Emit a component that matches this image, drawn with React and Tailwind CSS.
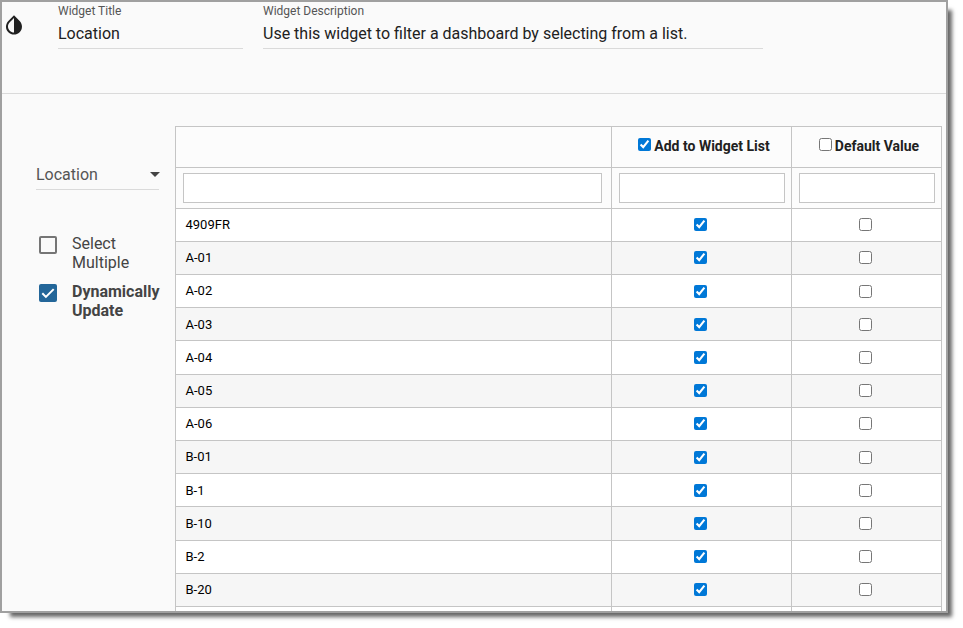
const rows = ['4909FR', 'A-01', 'A-02', 'A-03', 'A-04', 'A-05', 'A-06', 'B-01', 'B-1', 'B-10', 'B-2', 'B-20', '']

function Field({ label, value, className }) {
  return (
    <label className={`flex flex-col border-b border-[#dadada] h-[47px] ${className}`}>
      <span className="text-xs leading-[18px] text-[#555]">{label}</span>
      <span className="text-base leading-[28px] text-[#212121]">{value}</span>
    </label>
  )
}

function Check({ checked = false, className = '' }) {
  return (
    <input
      type="checkbox"
      defaultChecked={checked}
      className={`block w-[13px] h-[13px] shrink-0 accent-[#0078d7] ${className}`}
    />
  )
}

function Option({ checked, label }) {
  return (
    <label className={`flex w-[128px] text-base leading-[19px] text-[#444] ${checked ? 'font-bold' : ''}`}>
      {checked ? (
        <span className="mt-[3px] w-[18px] h-[18px] shrink-0 rounded-[2px] bg-[#236699]">
          <svg viewBox="0 0 18 18" className="w-full h-full" fill="none" stroke="#fff" strokeWidth="2">
            <path d="M3.3 9.3l3.6 3.6L14.7 5.1" />
          </svg>
        </span>
      ) : (
        <span className="mt-[3px] w-[18px] h-[18px] shrink-0 rounded-[2px] border-2 border-[#757575]" />
      )}
      <span className="ml-[15px] mt-px">{label}</span>
    </label>
  )
}

function Filter({ className }) {
  return <input className={`block h-[30px] min-w-0 flex-1 mt-[5px] border border-[#c5c5c5] bg-white ${className}`} />
}

const columns = 'grid grid-cols-[436px_180px_150px]'
const cell = 'flex border-r border-b border-[#c5c5c5]'

export default function App() {
  return (
    <div className="w-[963px] h-[628px] bg-white overflow-hidden font-['Roboto',sans-serif]">
      <div className="w-[948px] h-[613px] border-2 border-[#a0a0a0] bg-[#fafafa] overflow-hidden flex flex-col shadow-[7px_7px_4px_-3px_rgba(0,0,0,0.6)]">
        <header className="flex h-[92px] shrink-0 border-b border-[#dadada]">
          <svg viewBox="0 0 24 24" className="mt-[11px] w-6 h-6 shrink-0" fill="#212121">
            <path d="M17.66 7.93L12 2.27 6.34 7.93c-3.12 3.12-3.12 8.19 0 11.31C7.9 20.8 9.95 21.58 12 21.58c2.05 0 4.1-.78 5.66-2.34 3.12-3.12 3.12-8.19 0-11.31zM12 19.59c-1.6 0-3.11-.62-4.24-1.76C6.62 16.69 6 15.19 6 13.59s.62-3.11 1.76-4.24L12 5.1v14.49z" />
          </svg>
          <Field label="Widget Title" value="Location" className="ml-8 w-[185px]" />
          <Field
            label="Widget Description"
            value="Use this widget to filter a dashboard by selecting from a list."
            className="ml-5 w-[500px]"
          />
        </header>

        <div className="flex">
          <aside className="w-[173px] shrink-0 pl-[34px] pt-[68px]">
            <div className="flex items-center justify-between w-[123px] h-[28px] border-b border-[#dadada] text-base leading-6 text-[#555]">
              <span className="-mt-px">Location</span>
              <svg viewBox="0 0 10 5" className="w-[10px] h-[5px] -mt-[3px] -mr-px">
                <path d="M0 0h10L5 5z" fill="#444" />
              </svg>
            </div>
            <div className="flex flex-col gap-[9px] mt-[43px] ml-[3px]">
              <Option label="Select Multiple" />
              <Option label="Dynamically Update" checked />
            </div>
          </aside>

          <div className="mt-[32px] w-[767px] border-t border-l border-[#c5c5c5]">
            <div className={`${columns} h-[41px] bg-[#fcfcfc] text-sm font-bold text-[#212121]`}>
              <div className={cell} />
              <div className={`${cell} items-center justify-center pl-[5px] pb-[2px]`}>
                <Check checked className="-mt-[3px] mr-[3px]" />
                Add to Widget List
              </div>
              <div className={`${cell} items-center justify-center pl-[5px] pb-[2px]`}>
                <Check className="-mt-[3px] mr-[3px]" />
                Default Value
              </div>
            </div>
            <div className={`${columns} h-[40.7px] bg-[#fcfcfc]`}>
              <div className={cell}><Filter className="ml-[7px] mr-[9px]" /></div>
              <div className={cell}><Filter className="ml-[7px] mr-[6px]" /></div>
              <div className={cell}><Filter className="ml-[7px] mr-[6px]" /></div>
            </div>
            {rows.map((name, i) => (
              <div key={i} className={`${columns} h-[33.19px] text-[13px] text-black ${i % 2 ? 'bg-[#f6f6f6]' : 'bg-white'}`}>
                <div className={`${cell} items-center pl-[9.5px]`}>{name}</div>
                <div className={`${cell} items-center justify-center`}>
                  <Check checked className="mr-[2px]" />
                </div>
                <div className={`${cell} items-center justify-center`}>
                  <Check className="mr-[2px]" />
                </div>
              </div>
            ))}
          </div>
        </div>
      </div>
    </div>
  )
}
